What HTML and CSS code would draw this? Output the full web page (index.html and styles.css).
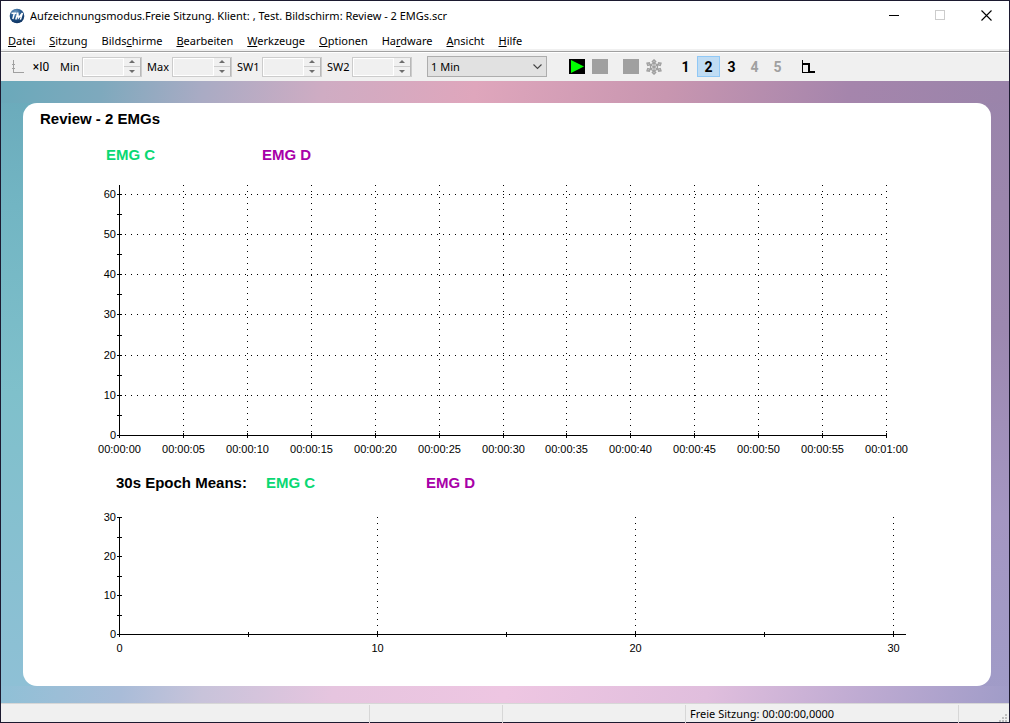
FILE: index.html
```html
<!DOCTYPE html>
<html lang="de">
<head>
    <meta charset="UTF-8">
    <meta name="viewport" content="width=device-width, initial-scale=1.0">
    <title>Review - 2 EMGs</title>
    <link rel="stylesheet" href="styles.css">
</head>
<body>
    <div class="window">
        <header class="titlebar">
            <svg class="app-icon" width="16" height="16" viewBox="0 0 16 16">
                <defs>
                    <radialGradient id="kugel" cx="40%" cy="25%" r="80%">
                        <stop offset="0" stop-color="#6f9cc4"/>
                        <stop offset="0.5" stop-color="#1f5288"/>
                        <stop offset="1" stop-color="#0d2f5c"/>
                    </radialGradient>
                </defs>
                <circle cx="8" cy="8" r="7.3" fill="url(#kugel)"/>
                <path d="M2.5 5.2h5M5.4 5.2L3.8 11M9 4.6L6.8 11.4M8.8 5.4l.6 4.6 4-5-2 6.6" fill="none" stroke="#fff" stroke-width="1.5"/>
            </svg>
            <span class="title-text">Aufzeichnungsmodus.Freie Sitzung. Klient: , Test. Bildschirm: Review - 2 EMGs.scr</span>
            <button class="win-btn" aria-label="Minimieren">
                <svg width="11" height="11" viewBox="0 0 11 11"><path d="M0 5.5h10" stroke="#000" shape-rendering="crispEdges"/></svg>
            </button>
            <button class="win-btn" aria-label="Maximieren" disabled>
                <svg width="11" height="11" viewBox="0 0 11 11"><path d="M.5.5h9v9h-9z" fill="none" stroke="#ccc" shape-rendering="crispEdges"/></svg>
            </button>
            <button class="win-btn" aria-label="Schließen">
                <svg width="11" height="11" viewBox="0 0 11 11"><path d="M.5.5l10 10M10.5.5l-10 10" stroke="#000" stroke-width="1.1"/></svg>
            </button>
        </header>

        <nav class="menubar">
            <a href="#"><u>D</u>atei</a>
            <a href="#"><u>S</u>itzung</a>
            <a href="#">Bilds<u>c</u>hirme</a>
            <a href="#"><u>B</u>earbeiten</a>
            <a href="#"><u>W</u>erkzeuge</a>
            <a href="#"><u>O</u>ptionen</a>
            <a href="#">Ha<u>r</u>dware</a>
            <a href="#"><u>A</u>nsicht</a>
            <a href="#"><u>H</u>ilfe</a>
        </nav>

        <div class="toolbar">
            <button class="tool axis" aria-label="Achse" disabled>
                <svg width="12" height="14" viewBox="0 0 12 14" shape-rendering="crispEdges"><path d="M1.5 0v12.5H12M0 4.5h3M0 8.5h3" fill="none" stroke="#a0a0a0"/></svg>
            </button>
            <button class="tool times">×I0</button>

            <div class="field">
                <label class="short" for="min">Min</label>
                <span class="spin"><input id="min" type="text" disabled><span class="arrows"><button aria-label="Min höher" disabled></button><button aria-label="Min tiefer" disabled></button></span></span>
            </div>
            <div class="field">
                <label for="max">Max</label>
                <span class="spin"><input id="max" type="text" disabled><span class="arrows"><button aria-label="Max höher" disabled></button><button aria-label="Max tiefer" disabled></button></span></span>
            </div>
            <div class="field">
                <label for="sw1">SW1</label>
                <span class="spin"><input id="sw1" type="text" disabled><span class="arrows"><button aria-label="SW1 höher" disabled></button><button aria-label="SW1 tiefer" disabled></button></span></span>
            </div>
            <div class="field">
                <label for="sw2">SW2</label>
                <span class="spin"><input id="sw2" type="text" disabled><span class="arrows"><button aria-label="SW2 höher" disabled></button><button aria-label="SW2 tiefer" disabled></button></span></span>
            </div>

            <div class="dauer">
                <select aria-label="Zeitfenster">
                    <option>1 Min</option>
                </select>
                <svg width="9" height="6" viewBox="0 0 9 6"><path d="M.5.5l4 4 4-4" fill="none" stroke="#444" stroke-width="1.1"/></svg>
            </div>

            <button class="tool" aria-label="Start">
                <svg width="16" height="15" viewBox="0 0 16 15"><path d="M0 0h16v15H0z"/><path d="M2 1l13 6.5L2 14z" fill="#0f0"/></svg>
            </button>
            <button class="tool" aria-label="Stopp" disabled>
                <svg width="16" height="15" viewBox="0 0 16 15"><path d="M0 0h16v15H0z" fill="#a0a0a0"/></svg>
            </button>
            <button class="tool pause" aria-label="Pause" disabled>
                <svg width="16" height="15" viewBox="0 0 16 15"><path d="M0 0h16v15H0z" fill="#a0a0a0"/></svg>
            </button>
            <button class="tool" aria-label="Einfrieren" disabled>
                <svg width="16" height="16" viewBox="0 0 16 16" fill="none" stroke="#a0a0a0">
                    <path d="M8 1v14M1.5 4.3l13 7.4M1.5 11.700l13-7.400" stroke-width="1.2"/>
                    <path d="M8 .8l1.800 1.700L8 4.500 6.200 2.500zM8 15.200l1.800-1.700L8 11.500l-1.800 2zM.9 4.200l2.500-.6.800 2.300-2.500.6zM15.100 4.200l-2.500-.6-.8 2.300 2.500.6zM.9 11.800l2.500.6.800-2.300-2.500-.6zM15.100 11.800l-2.500.6-.8-2.300 2.500-.6z" stroke-width="1.2"/>
                    <path d="M8 3.900l3.500 2v4.200L8 12.100l-3.500-2V5.900z" stroke-width="1.2"/>
                </svg>
            </button>

            <div class="screens">
                <button>1</button>
                <button class="active">2</button>
                <button>3</button>
                <button disabled>4</button>
                <button disabled>5</button>
            </div>

            <button class="tool" aria-label="Schwelle">
                <svg width="13" height="13" viewBox="0 0 13 13" shape-rendering="crispEdges"><path d="M.5 0v13M0 12.5h13M6 11.5h7" fill="none" stroke="#000"/><path d="M0 4h7v8" fill="none" stroke="#000" stroke-width="2"/></svg>
            </button>
        </div>

        <main class="workspace">
            <section class="card">
                <h1>Review - 2 EMGs</h1>
                <div class="legend">
                    <span class="emg-c">EMG C</span>
                    <span class="emg-d">EMG D</span>
                </div>
                <svg id="verlauf" class="chart" viewBox="0 0 968 280"></svg>
                <div class="legend means">
                    <h2>30s Epoch Means:</h2>
                    <span class="emg-c">EMG C</span>
                    <span class="emg-d">EMG D</span>
                </div>
                <svg id="mittelwerte" class="chart" viewBox="0 0 968 150"></svg>
            </section>
        </main>

        <footer class="statusbar">
            <span></span>
            <span></span>
            <span></span>
            <span>Freie Sitzung: 00:00:00,0000</span>
            <span class="grip">
                <svg width="9" height="9" viewBox="0 0 9 9" fill="#bfbfbf" shape-rendering="crispEdges"><path d="M7 0h2v2H7zM4 3h2v2H4zM7 3h2v2H7zM1 6h2v2H1zM4 6h2v2H4zM7 6h2v2H7z"/></svg>
            </span>
        </footer>
    </div>

    <script>
        const NS = 'http://www.w3.org/2000/svg';

        function linie(svg, x1, y1, x2, y2, klasse) {
            const l = document.createElementNS(NS, 'path');
            l.setAttribute('d', `M${x1} ${y1}L${x2} ${y2}`);
            l.setAttribute('class', klasse);
            svg.appendChild(l);
        }

        function beschriftung(svg, x, y, text, klasse) {
            const t = document.createElementNS(NS, 'text');
            t.setAttribute('x', x);
            t.setAttribute('y', y);
            t.setAttribute('class', klasse);
            t.textContent = text;
            svg.appendChild(t);
        }

        function zeichneChart(id, c) {
            const svg = document.getElementById(id);
            const y0 = c.unten + 0.5;
            const x0 = c.links + 0.5;

            // y-Achse
            linie(svg, x0, c.oben, x0, c.unten + 3, 'axis-line');
            for (let v = 0; v <= c.yMax; v += 5) {
                const y = Math.round(c.unten - v * c.yFaktor);
                linie(svg, x0 - 2.5, y + 0.5, x0 + 2.5, y + 0.5, 'axis-line');
                if (v % 10 === 0) {
                    beschriftung(svg, c.links - 3, y + 4, v, 'y-label');
                    if (c.gitter && v > 0) {
                        linie(svg, c.links + 6, y + 0.5, c.rechts, y + 0.5, 'grid-line');
                    }
                }
            }

            // x-Achse
            linie(svg, c.links, y0, c.rechts, y0, 'axis-line');
            c.xTicks.forEach((text, i) => {
                const x = Math.round(c.links + i * c.xSchritt) + 0.5;
                linie(svg, x, y0 - 2.5, x, y0 + 2.5, 'axis-line');
                if (text === null) return;
                beschriftung(svg, x, c.unten + 18, text, 'x-label');
                if (i > 0) linie(svg, x, c.oben, x, c.unten, 'grid-line');
            });
        }

        const zeiten = [];
        for (let s = 0; s <= 60; s += 5) {
            zeiten.push('00:' + String(Math.floor(s / 60)).padStart(2, '0') + ':' + String(s % 60).padStart(2, '0'));
        }

        zeichneChart('verlauf', {
            links: 96, rechts: 864, oben: 5, unten: 255,
            yMax: 60, yFaktor: 4.02, xSchritt: 63.92, xTicks: zeiten, gitter: true
        });
        zeichneChart('mittelwerte', {
            links: 96, rechts: 883, oben: 7, unten: 124,
            yMax: 30, yFaktor: 3.9, xSchritt: 129, xTicks: ['0', null, '10', null, '20', null, '30'], gitter: false
        });
    </script>
</body>
</html>
```
FILE: styles.css
```css
* {
    box-sizing: border-box;
}

body {
    margin: 0;
    font-family: "Noto Sans", "Open Sans", sans-serif;
    font-size: 11px;
    color: #000;
}

button {
    padding: 0;
    border: none;
    background: none;
    font: inherit;
    color: inherit;
}

.window {
    display: flex;
    flex-direction: column;
    min-height: 100vh;
    border: 1px solid #1c1a30;
    background: #fff;
}

/* Titelleiste */
.titlebar {
    display: flex;
    align-items: center;
    height: 29px;
    padding-left: 8px;
}

.title-text {
    flex: 1;
    margin-left: 5px;
    white-space: nowrap;
    overflow: hidden;
}

.win-btn {
    width: 46px;
    height: 29px;
}

.win-btn svg {
    display: block;
    margin: 0 auto;
}

/* Menü */
.menubar {
    display: flex;
    gap: 14px;
    height: 19px;
    padding-left: 7px;
    line-height: 22px;
}

.menubar a {
    color: #000;
    text-decoration: none;
}

/* Werkzeugleiste */
.toolbar {
    display: flex;
    align-items: center;
    height: 32px;
    padding: 3px 0 0 10px;
    background: linear-gradient(#f0f0f0 2px, #a0a0a0 2px, #a0a0a0 3px, #fff 3px, #fff 4px, #f0f0f0 4px);
}

.tool {
    width: 23px;
    height: 22px;
}

.tool svg {
    display: block;
    margin: 0 auto;
}

.axis {
    width: 14px;
}

.times {
    width: 32px;
    font-family: Roboto, sans-serif;
    font-size: 12px;
}

.field {
    display: flex;
    align-items: center;
    margin-right: 5px;
}

.field label {
    width: 25px;
    white-space: nowrap;
}

.field .short {
    width: 22px;
    margin-left: 3px;
}

.spin {
    display: flex;
    width: 60px;
    height: 20px;
    border: 1px solid #ccc;
}

.spin input {
    flex: 1;
    min-width: 0;
    padding: 0 2px;
    border: 1px solid #fff;
    background: #f0f0f0;
    font: inherit;
}

.arrows {
    display: flex;
    flex-direction: column;
    gap: 1px;
    width: 17px;
    border-right: 1px solid #b8b8b8;
    background: #ccc;
}

.arrows button {
    flex: 1;
    display: flex;
    align-items: center;
    justify-content: center;
    background: #f0f0f0;
}

.arrows button::before {
    content: "";
    border: 3px solid transparent;
    border-top-width: 0;
    border-bottom: 3px solid #6d6d6d;
}

.arrows button:last-child::before {
    border-top: 3px solid #6d6d6d;
    border-bottom-width: 0;
}

.dauer {
    position: relative;
    margin: 0 18px 0 10px;
}

.dauer select {
    appearance: none;
    display: block;
    width: 120px;
    height: 21px;
    padding: 0 3px;
    border: 1px solid #adadad;
    border-radius: 0;
    background: #e1e1e1;
    font: inherit;
    color: #000;
}

.dauer svg {
    position: absolute;
    top: 8px;
    right: 5px;
    pointer-events: none;
}

.pause {
    margin-left: 8px;
}

.screens {
    display: flex;
    margin: 0 8px 0 9px;
    font-family: Roboto, sans-serif;
    font-size: 14px;
    font-weight: bold;
}

.screens button {
    width: 23px;
    height: 21px;
}

.screens button:disabled {
    color: #a0a0a0;
}

.screens .active {
    border: 1px solid #90c8f6;
    background: #c0dcf3;
}

/* Arbeitsfläche */
.workspace {
    flex: 1;
    display: flex;
    padding: 22px 18px 17px 22px;
    background:
        linear-gradient(100deg, #6aa9ba, #7ea9bd 10%, #a9abc4 20%, #cfacc3 32%, #dfa6bc 47%, #c896b0 66%, #a585ac 84%, #9a84aa) top / 100% 22px no-repeat,
        linear-gradient(100deg, #8fc0d6, #a9bcd8 12%, #c8c3da 20%, #e6c5df 33%, #eec6e2 50%, #e0bedd 70%, #bfabd2 85%, #a09cc8) bottom / 100% 17px no-repeat,
        linear-gradient(#6aa9ba, #72b5c3 20%, #7fc0cb 50%, #8fc0d6) left / 50% 100% no-repeat,
        linear-gradient(#9a84aa, #9c88b0 40%, #a496c2 70%, #a09cc8) right / 50% 100% no-repeat;
}

.card {
    flex: 1;
    padding-top: 6px;
    border-radius: 14px;
    background: #fff;
    font-family: "Liberation Sans", Arial, sans-serif;
}

.card h1,
.card h2,
.legend {
    margin: 0;
    font-size: 15px;
    font-weight: bold;
    line-height: 20px;
}

.card h1 {
    padding-left: 17px;
}

.legend {
    display: grid;
    grid-template-columns: 156px 1fr;
    margin: 16px 0 15px;
    padding-left: 83px;
}

.means {
    grid-template-columns: 150px 160px 1fr;
    margin: 13px 0 17px;
    padding-left: 93px;
}

.emg-c {
    color: #0ad873;
}

.emg-d {
    color: #a800a8;
}

.chart {
    display: block;
    width: 100%;
    font-size: 11px;
}

.axis-line,
.grid-line {
    fill: none;
    stroke: #000;
    shape-rendering: crispEdges;
}

.grid-line {
    stroke-dasharray: 1 5;
}

.x-label {
    text-anchor: middle;
}

.y-label {
    text-anchor: end;
}

/* Statusleiste */
.statusbar {
    display: grid;
    grid-template-columns: 368px 133px 183px 1fr 51px;
    height: 19px;
    padding-top: 1px;
    border-top: 1px solid #d7d7d7;
    background: #f0f0f0;
    line-height: 18px;
}

.statusbar span {
    padding-left: 4px;
    border-left: 1px solid #d7d7d7;
}

.statusbar span:first-child {
    border-left: none;
}

.statusbar .grip {
    display: flex;
    align-items: flex-end;
    justify-content: flex-end;
    padding-right: 2px;
}
```
